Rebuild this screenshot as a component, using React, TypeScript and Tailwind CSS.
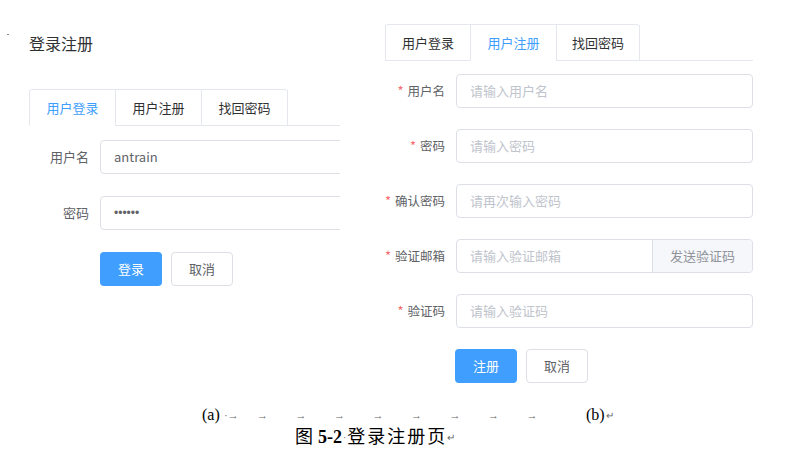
import React from "react";

const sans = { fontFamily: '"Noto Sans CJK SC", "Noto Sans", sans-serif' };

function Tabs({ right, active }: { right?: boolean; active: number }) {
  const names = ["用户登录", "用户注册", "找回密码"];
  const wl = ["w-[86px]", "w-[86px]", "w-[87px]"];
  const wr = ["w-[85px]", "w-[86px]", "w-[84px]"];
  return (
    <div className="flex">
      <div className="flex border-t border-[#e4e7ed] rounded-t-[4px]">
        {names.map((n, i) => (
          <div
            key={n}
            className={
              (right ? wr[i] : wl[i]) +
              " h-[36px] flex items-center justify-center text-[13px] border-l border-l-[#e4e7ed] border-b " +
              (i === 2 ? "border-r border-r-[#e4e7ed] " : "") +
              (i === active ? "border-b-white text-[#409eff]" : "border-b-[#e4e7ed] text-[#303133]")
            }
          >
            {n}
          </div>
        ))}
      </div>
      <div className="flex-1 border-b border-[#e4e7ed]" />
    </div>
  );
}

function Label({ text, req }: { text: string; req?: boolean }) {
  return (
    <div className="w-[71px] shrink-0 pr-[11px] flex items-center justify-end whitespace-nowrap text-[13px] text-[#606266]">
      {req && <span className="text-[#f56c6c] mr-[4px]">*</span>}
      <span className={req ? "text-[12.5px]" : ""}>{text}</span>
    </div>
  );
}

function Input({ value, placeholder, wide }: { value?: string; placeholder?: string; wide?: boolean }) {
  return (
    <div
      className={
        "h-[34px] border border-[#dcdfe6] rounded-[4px] bg-white flex items-center pl-[13px] text-[13px] " +
        (wide ? "w-[300px] shrink-0 " : "flex-1 ") +
        (value ? "text-[#606266]" : "text-[#c0c4cc]")
      }
    >
      {value ?? placeholder}
    </div>
  );
}

export default function App() {
  const arrows = [0, 1, 2, 3, 4, 5, 6, 7];
  return (
    <div className="w-[787px] h-[460px] bg-white overflow-hidden" style={sans}>
      <div className="flex h-[404px]">
        {/* Left panel */}
        <div className="w-[340px] overflow-hidden shrink-0 pt-[32px]">
          <div className="flex">
            <div className="w-[29px] shrink-0 pl-[7px] pt-[2px]">
              <div className="w-[2px] h-[1px] bg-[#888]" />
            </div>
            <div className="h-[22px] leading-[22px] text-[16px] text-[#303133]">登录注册</div>
          </div>
          <div className="pl-[29px]">
            <div className="mt-[35px]">
              <Tabs active={0} />
            </div>
            <div className="mt-[14px] flex flex-col gap-[22px]">
              <div className="flex">
                <Label text="用户名" />
                <Input value="antrain" wide />
              </div>
              <div className="flex">
                <Label text="密码" />
                <div
                  className="w-[300px] shrink-0 h-[34px] border border-[#dcdfe6] rounded-[4px] flex items-center pl-[13px] text-[12px] text-[#606266]"
                  style={{ fontFamily: '"Liberation Sans", sans-serif' }}
                >
                  ••••••
                </div>
              </div>
              <div className="flex pl-[71px] gap-[9px]">
                <div className="w-[62px] h-[34px] rounded-[4px] bg-[#409eff] text-white text-[13px] flex items-center justify-center">登录</div>
                <div className="w-[62px] h-[34px] rounded-[4px] border border-[#dcdfe6] text-[#606266] text-[13px] flex items-center justify-center">取消</div>
              </div>
            </div>
          </div>
        </div>
        <div className="w-[30px] shrink-0" />
        {/* Right panel */}
        <div className="w-[383px] shrink-0 pl-[15px] pt-[24px]">
          <Tabs right active={1} />
          <div className="mt-[13px] flex flex-col gap-[21px]">
            <div className="flex">
              <Label text="用户名" req />
              <Input placeholder="请输入用户名" />
            </div>
            <div className="flex">
              <Label text="密码" req />
              <Input placeholder="请输入密码" />
            </div>
            <div className="flex">
              <Label text="确认密码" req />
              <Input placeholder="请再次输入密码" />
            </div>
            <div className="flex">
              <Label text="验证邮箱" req />
              <div className="flex-1 h-[34px] border border-[#dcdfe6] rounded-[4px] flex overflow-hidden">
                <div className="flex-1 flex items-center pl-[13px] text-[13px] text-[#c0c4cc]">请输入验证邮箱</div>
                <div className="w-[100px] bg-[#f5f7fa] border-l border-[#dcdfe6] flex items-center justify-center text-[13px] text-[#909399]">发送验证码</div>
              </div>
            </div>
            <div className="flex">
              <Label text="验证码" req />
              <Input placeholder="请输入验证码" />
            </div>
            <div className="flex pl-[70px] gap-[9px]">
              <div className="w-[62px] h-[34px] rounded-[4px] bg-[#409eff] text-white text-[13px] flex items-center justify-center">注册</div>
              <div className="w-[62px] h-[34px] rounded-[4px] border border-[#dcdfe6] text-[#606266] text-[13px] flex items-center justify-center">取消</div>
            </div>
          </div>
        </div>
      </div>
      {/* Caption */}
      <div
        className="h-[22px] flex items-center pl-[202px] text-[16px] text-black"
        style={{ fontFamily: '"Liberation Serif", "Noto Sans CJK SC", serif' }}
      >
        <span className="w-[22px]">(a)</span>
        <span className="w-[33px] text-[11px] text-[#666]">·→</span>
        {arrows.map((a) => (
          <span key={a} className="w-[38.5px] text-[11px] text-[#666]">→</span>
        ))}
        <span className="w-[21px]" />
        <span>(b)</span>
        <span className="text-[10px] text-[#666] ml-[1px]">↵</span>
      </div>
      <div
        className="h-[22px] flex items-center pl-[295px] text-[18px] text-black"
        style={{ fontFamily: '"Liberation Serif", "Noto Sans CJK SC", serif' }}
      >
        <span>图</span>
        <span className="ml-[5px] font-bold">5-2</span>
        <span className="text-[10px] text-[#666] mx-[1px]">·</span>
        <span className="tracking-[2px]">登录注册页</span>
        <span className="text-[10px] text-[#666]">↵</span>
      </div>
    </div>
  );
}
